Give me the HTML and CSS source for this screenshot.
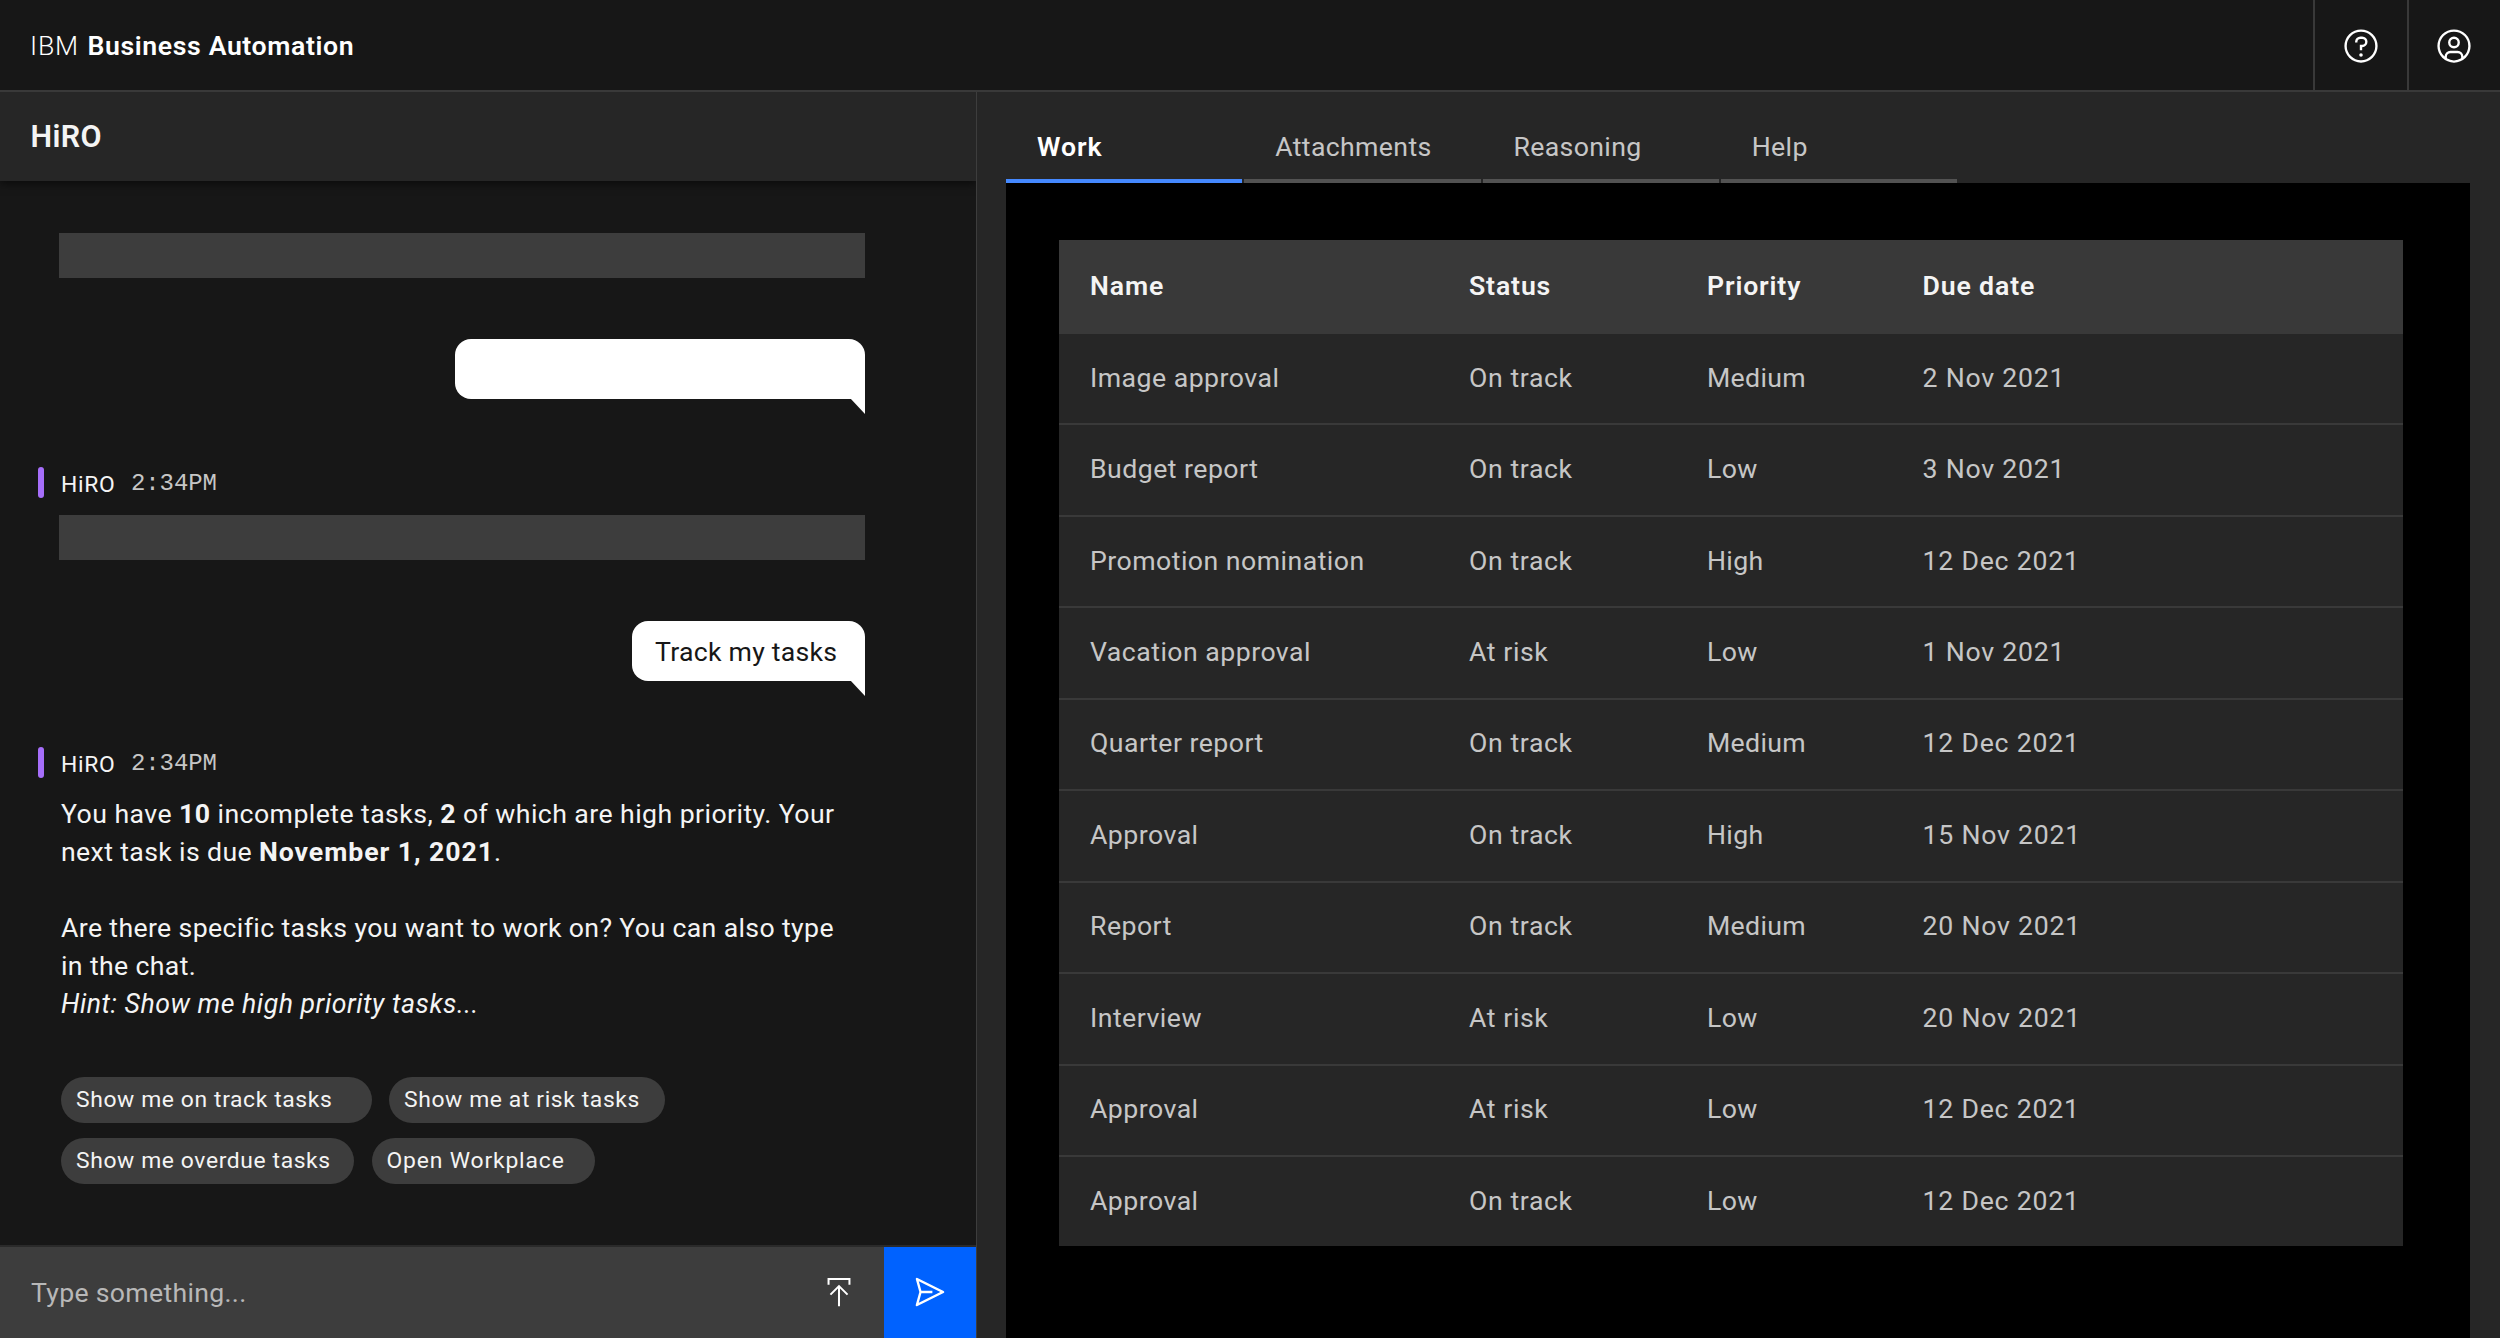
FILE: index.html
```html
<!DOCTYPE html>
<html lang="en">
<head>
  <meta charset="UTF-8" />
  <meta name="viewport" content="width=device-width, initial-scale=1.0"/>
  <title>IBM Business Automation</title>
  <link rel="stylesheet" href="styles.css">
</head>
<body>
  <header class="topbar">
    <div class="brand"><span class="brand-prefix">IBM</span> <strong>Business Automation</strong></div>
    <button class="topbar-btn" aria-label="Help">
      <svg class="icon" viewBox="0 0 32 32"><path d="M16,2A14,14,0,1,0,30,16,14,14,0,0,0,16,2Zm0,26A12,12,0,1,1,28,16,12,12,0,0,1,16,28Z"/><circle cx="16" cy="23.5" r="1.5"/><path d="M17,8H15.5A4.49,4.49,0,0,0,11,12.5V13h2v-.5A2.5,2.5,0,0,1,15.5,10H17a2.5,2.5,0,0,1,0,5H15v4.5h2V17a4.5,4.5,0,0,0,0-9Z"/></svg>
    </button>
    <button class="topbar-btn" aria-label="Profile">
      <svg class="icon" viewBox="0 0 32 32"><path d="M16,8a5,5,0,1,0,5,5A5,5,0,0,0,16,8Zm0,8a3,3,0,1,1,3-3A3,3,0,0,1,16,16Z"/><path d="M16,2A14,14,0,1,0,30,16,14,14,0,0,0,16,2ZM10,26.38V25a3,3,0,0,1,3-3h6a3,3,0,0,1,3,3v1.38a12,12,0,0,1-12,0Zm14-1.46A5,5,0,0,0,19,20H13a5,5,0,0,0-5,4.92,12,12,0,1,1,16,0Z"/></svg>
    </button>
  </header>

  <main class="layout">
    <section class="chat">
      <h1 class="chat-title">HiRO</h1>

      <div class="messages">
        <div class="placeholder"></div>
        <div class="bubble bubble-empty"></div>

        <div class="meta">
          <span class="meta-bar"></span>
          <span class="meta-name">HiRO</span>
          <span class="meta-time">2:34PM</span>
        </div>
        <div class="placeholder"></div>
        <div class="bubble">Track my tasks</div>

        <div class="meta meta-last">
          <span class="meta-bar"></span>
          <span class="meta-name">HiRO</span>
          <span class="meta-time">2:34PM</span>
        </div>
        <p class="reply">
          <span class="summary">You have <b>10</b> incomplete tasks, <b>2</b> of which are high priority. Your</span><br>
          next task is due <b class="due">November 1, 2021</b>.<br>
          <br>
          Are there specific tasks you want to work on? You can also type<br>
          in the chat.<br>
          <em>Hint: Show me high priority tasks...</em>
        </p>

        <div class="chips">
          <button class="chip chip-track">Show me on track tasks</button>
          <button class="chip chip-risk">Show me at risk tasks</button>
          <button class="chip chip-overdue">Show me overdue tasks</button>
          <button class="chip chip-open">Open Workplace</button>
        </div>
      </div>

      <div class="composer">
        <span class="composer-text">Type something...</span>
        <svg class="icon upload" viewBox="0 0 32 32"><path d="M7.2 9.8V5.1H24.8V9.8M16 11V28M8.8 18.2L16 11L23.2 18.2"/></svg>
        <button class="send" aria-label="Send">
          <svg class="icon" viewBox="0 0 32 32"><path d="M27.45,15.11l-22-11a1,1,0,0,0-1.08.12,1,1,0,0,0-.33,1L7,16,4,26.74A1,1,0,0,0,5,28a1,1,0,0,0,.45-.11l22-11a1,1,0,0,0,0-1.78Zm-20.9,10L8.76,17H18V15H8.76L6.55,6.89,24.76,16Z"/></svg>
        </button>
      </div>
    </section>

    <section class="workspace">
      <nav class="tabs">
        <a class="tab active">Work</a>
        <a class="tab">Attachments</a>
        <a class="tab">Reasoning</a>
        <a class="tab">Help</a>
      </nav>

      <div class="panel">
        <div class="table">
          <div class="tr th"><span>Name</span><span>Status</span><span>Priority</span><span>Due date</span></div>
          <div class="tr"><span>Image approval</span><span>On track</span><span>Medium</span><span>2 Nov 2021</span></div>
          <div class="tr"><span>Budget report</span><span>On track</span><span>Low</span><span>3 Nov 2021</span></div>
          <div class="tr"><span>Promotion nomination</span><span>On track</span><span>High</span><span>12 Dec 2021</span></div>
          <div class="tr"><span>Vacation approval</span><span>At risk</span><span>Low</span><span>1 Nov 2021</span></div>
          <div class="tr"><span>Quarter report</span><span>On track</span><span>Medium</span><span>12 Dec 2021</span></div>
          <div class="tr"><span>Approval</span><span>On track</span><span>High</span><span>15 Nov 2021</span></div>
          <div class="tr"><span>Report</span><span>On track</span><span>Medium</span><span>20 Nov 2021</span></div>
          <div class="tr"><span>Interview</span><span>At risk</span><span>Low</span><span>20 Nov 2021</span></div>
          <div class="tr"><span>Approval</span><span>At risk</span><span>Low</span><span>12 Dec 2021</span></div>
          <div class="tr"><span>Approval</span><span>On track</span><span>Low</span><span>12 Dec 2021</span></div>
        </div>
      </div>
    </section>
  </main>
</body>
</html>
```
FILE: styles.css
```css
* {
  box-sizing: border-box;
}

body {
  margin: 0;
  height: 100vh;
  display: flex;
  flex-direction: column;
  overflow: hidden;
  background: #262626;
  color: #f4f4f4;
  font-family: Roboto, "Open Sans", sans-serif;
  font-size: 26.67px;
}

button {
  margin: 0;
  padding: 0;
  border: none;
  background: none;
  color: inherit;
  font: inherit;
}

.icon {
  display: block;
  width: 38px;
  height: 38px;
  fill: #fff;
}

/* top bar */
.topbar {
  flex: none;
  display: flex;
  height: 92px;
  background: #171717;
  border-bottom: 2px solid #393939;
}

.brand {
  flex: 1;
  padding: 3px 0 0 30px;
  line-height: 87px;
  color: #fff;
}

.brand-prefix {
  margin-right: 2px;
  font-weight: 300;
  letter-spacing: 0.8px;
}

.brand strong {
  font-weight: 600;
  letter-spacing: 0.6px;
}

.topbar-btn {
  display: flex;
  align-items: center;
  justify-content: center;
  width: 93.5px;
  padding-top: 2px;
  border-left: 2px solid #393939;
}

/* chat */
.layout {
  flex: 1;
  display: flex;
  min-height: 0;
}

.chat {
  flex: none;
  display: flex;
  flex-direction: column;
  width: 977px;
  overflow: hidden;
  background: #171717;
  border-right: 1px solid #3d3d3d;
}

.chat-title {
  flex: none;
  margin: 0;
  padding-left: 30.5px;
  height: 89px;
  line-height: 89px;
  font-size: 30.5px;
  font-weight: 600;
  letter-spacing: 0.4px;
  background: #262626;
  box-shadow: 0 3px 8px rgba(0, 0, 0, 0.5);
}

.messages {
  flex: 1;
  display: flex;
  flex-direction: column;
  min-height: 0;
  padding: 52px 111px 0 38px;
}

.placeholder {
  height: 45px;
  margin-left: 21px;
  background: #3d3d3d;
}

.bubble {
  position: relative;
  align-self: flex-end;
  height: 60px;
  margin-top: 61px;
  padding: 0 23px;
  width: 233px;
  line-height: 62px;
  letter-spacing: 0.25px;
  white-space: nowrap;
  color: #171717;
  background: #fff;
  border-radius: 16px 16px 0 16px;
}

.bubble-empty {
  width: 410px;
}

/* tail under the lower right corner */
.bubble::after {
  content: "";
  position: absolute;
  right: 0;
  top: 59px;
  width: 15px;
  height: 16px;
  background: #fff;
  clip-path: polygon(0 0, 100% 0, 100% 100%);
}

.meta {
  display: flex;
  align-items: center;
  height: 31px;
  margin: 68px 0 17px;
  font-size: 22.86px;
}

.meta-last {
  margin-top: 66px;
}

.meta-bar {
  width: 6px;
  height: 31px;
  border-radius: 3px;
  background: #a66efa;
}

.meta-name {
  width: 70px;
  padding-top: 3px;
  margin-left: 17px;
  letter-spacing: 0.7px;
}

.meta-time {
  padding-top: 1px;
  font-family: "Liberation Mono", monospace;
  font-size: 24px;
  letter-spacing: -0.1px;
  color: #c6c6c6;
}

.reply {
  margin: 0 0 0 23px;
  line-height: 38.1px;
  letter-spacing: 0.36px;
  white-space: nowrap;
}

.reply .summary {
  letter-spacing: 0.43px;
}

.reply .due {
  letter-spacing: 0.95px;
}

.reply em {
  letter-spacing: 0.53px;
}

.chips {
  display: flex;
  flex-wrap: wrap;
  gap: 15px 17.5px;
  margin: 53px 0 0 23px;
}

.chip {
  height: 46px;
  padding-left: 15px;
  border-radius: 23px;
  background: #3d3d3d;
  font-size: 22.86px;
  letter-spacing: 0.62px;
  text-align: left;
  white-space: nowrap;
}

.chip-track {
  width: 310.5px;
}

.chip-risk {
  width: 276px;
}

.chip-overdue {
  width: 293px;
}

.chip-open {
  width: 223px;
  letter-spacing: 0.85px;
}

.composer {
  flex: none;
  display: flex;
  align-items: center;
  height: 93px;
  background: #3d3d3d;
  border-top: 2px solid #2a2a2a;
}

.composer-text {
  flex: 1;
  padding-left: 31px;
  letter-spacing: 0.3px;
  color: #b8b8b8;
}

.upload {
  margin: 0 26px 1px 0;
  fill: none;
  stroke: #fff;
  stroke-width: 1.7;
}

.send {
  display: flex;
  align-items: center;
  justify-content: center;
  width: 92px;
  height: 91px;
  padding-bottom: 1px;
  background: #0062ff;
}

/* workspace */
.workspace {
  flex: 1;
  display: flex;
  flex-direction: column;
  padding: 0 30px 0 29px;
}

.tabs {
  flex: none;
  display: flex;
  gap: 2px;
  height: 91px;
}

.tab {
  width: 236.25px;
  padding: 24px 0 0 31px;
  line-height: 63px;
  letter-spacing: 0.35px;
  color: #c6c6c6;
  border-bottom: 4px solid #525252;
}

.tab.active {
  color: #fff;
  font-weight: 600;
  letter-spacing: 0.9px;
  border-color: #4589ff;
}

.panel {
  flex: 1;
  padding: 57px 67px 0 53px;
  background: #000;
}

.table {
  background: #262626;
}

.tr {
  display: grid;
  grid-template-columns: 379px 238px 215.5px 1fr;
  align-items: center;
  height: 91.44px;
  padding: 0 0 2px 31px;
  color: #c6c6c6;
  letter-spacing: 0.6px;
  border-bottom: 2px solid #393939;
}

.tr span:first-child {
  letter-spacing: 0.47px;
}

.tr span:nth-child(3) {
  letter-spacing: 0.35px;
}

.tr span:last-child {
  letter-spacing: 0.78px;
}

.tr:last-child {
  height: 89.44px;
  border-bottom: none;
}

.tr.th {
  height: 94px;
  background: #393939;
  border-bottom: none;
  color: #f4f4f4;
  font-weight: 600;
}

.tr.th span {
  letter-spacing: 0.85px;
}
```
